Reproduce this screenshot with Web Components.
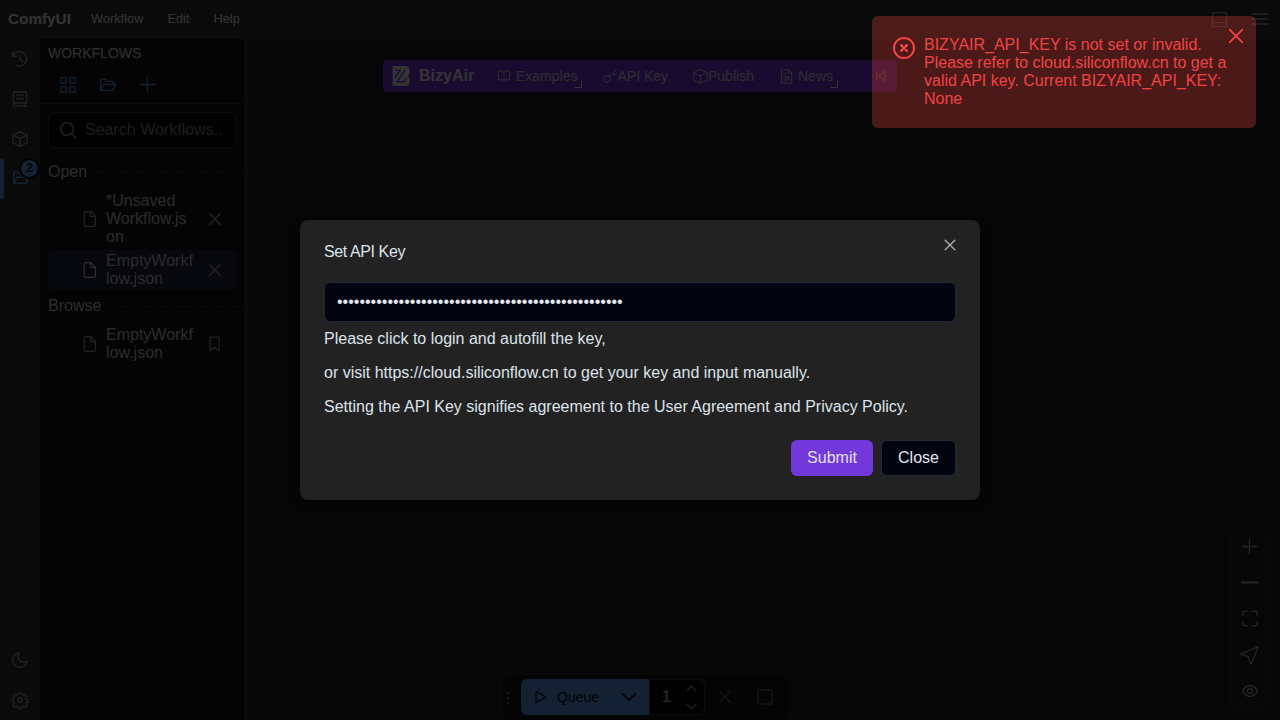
<!DOCTYPE html>
<html lang="en">
<head>
<meta charset="utf-8">
<title>ComfyUI</title>
<style>
html,body{margin:0;height:100%;overflow:hidden;background:#222}
body{font:16px/18px "Liberation Sans",Arial,sans-serif;color:#fff}
</style>
</head>
<body>
<comfy-app></comfy-app>
<script>
const ICONS = {
  history:'<path d="M.7 1v4h4"/><path d="M.9 4.8A7.2 7.2 0 1 1 4 14.2"/><path d="M8 4.2V8l2.6 2.6"/>',
  book:'<path d="M14.500 12V1H2.800Q1.500 1 1.500 2.300v11.400Q1.500 15.200 2.800 15.200H14.500M14.500 12H2.800Q1.500 12 1.500 13.500M13.500 12v3M5 4.200h6.500M5 7.700h6.500"/>',
  box:'<path d="M8 .7l7 3.300v8L8 15.300 1 12V4zM1 4l7 3.400L15 4M8 7.400v7.900"/>',
  folder:'<path d="M.7 13.300V3.200Q.7 2.200 1.700 2.200H5.300l1.700 2.200h5Q13 4.400 13 5.400V7M.8 13.200L3.600 7.300H15.500L13 13.300Z"/>',
  grid:'<rect x=".6" y=".6" width="5.800" height="5.800" rx="1.200"/><rect x="9.600" y=".6" width="5.800" height="5.800" rx="1.200"/><rect x=".6" y="9.600" width="5.800" height="5.800" rx="1.200"/><rect x="9.600" y="9.600" width="5.800" height="5.800" rx="1.200"/>',
  plus:'<path d="M7.500 .5v14.500M.2 7.500h14.600"/>',
  minus:'<path d="M.2 7.500h15.600"/>',
  search:'<circle cx="7" cy="7" r="6.300"/><path d="M11.600 11.600L15.700 15.700"/>',
  file:'<path d="M3.500 .7H9l4.400 4.600v8.600Q13.400 15.300 12 15.300H3.500Q2.200 15.300 2.200 14V2Q2.200 .7 3.500 .7zM8.700 .7v4.800h4.700"/>',
  times:'<path d="M2.500 2.500l11 11M13.500 2.500l-11 11"/>',
  bookmark:'<path d="M3 1.200h9v13.600L7.500 11.300l-4.500 3.500z"/>',
  moon:'<path d="M7 .8A7.300 7.300 0 1 0 15.200 9.200 6 6 0 0 1 7 .8z"/>',
  cog:'<circle cx="8" cy="8" r="2.200"/><path d="M6.700.8h2.600l.5 2 1.200.5 1.800-1.100 1.900 1.900-1.100 1.800.5 1.200 1.900.5v2.500l-1.900.5-.5 1.200 1.100 1.800-1.900 1.900-1.800-1.100-1.200.5-.5 2H6.700l-.5-2-1.200-.5-1.800 1.100-1.900-1.900 1.100-1.800-.5-1.200L.6 9.700V7.200l1.300-.5.5-1.200-1.100-1.800 1.900-1.900L5 2.900l1.200-.5z"/>',
  panel:'<rect x="1.500" y="1.500" width="14" height="14" rx="1"/><path d="M1.500 11.500h14"/>',
  bars:'<path d="M0 3h16M0 8h16M0 13h16"/>',
  openbook:'<path d="M8 4Q7.500 2.300 5.500 2.300H1.500v10h4.500Q8 12.300 8 14Q8 12.300 10 12.300h4.500v-10h-4Q8 2.300 8 4v10"/>',
  key:'<circle cx="4.700" cy="11.300" r="3.900"/><path d="M7.500 8.500L15 1M11 5l1.500 2 2.500-2"/>',
  news:'<path d="M3 1h7.200L13.500 4.300V15H3zM10 1v3.500h3.500M5.500 5h2"/><path d="M5.500 7.500h5.500V12H5.500z" fill="currentColor" fill-opacity=".5" stroke-opacity=".5"/>',
  back:'<path d="M3 2.500v11M13 2.500v11L5 8z"/>',
  play:'<path d="M2.500 1.500L13.800 8 2.500 14.500z"/>',
  down:'<path d="M1.500 4.800L8 11.200l6.500-6.400"/>',
  up:'<path d="M1.500 11.200L8 4.800l6.500 6.400"/>',
  stop:'<rect x="1" y="1" width="14" height="14" rx="1.500"/>',
  expand:'<path d="M.8 4.700V1.800Q.8.300 2.300.300h2.900M10.800.300h2.900q1.500 0 1.500 1.500v2.900M15.200 10.300v2.900q0 1.500-1.500 1.500h-2.900M5.200 14.700H2.300q-1.500 0-1.500-1.500v-2.900"/>',
  send:'<path d="M15.500.5L9.200 15.500 7 9 .5 6.800z"/>',
  eye:'<path d="M.5 8Q3.500 2.500 8 2.500T15.500 8Q12.500 13.500 8 13.500T.5 8z"/><circle cx="8" cy="8" r="2.500"/>',
  errorcircle:'<circle cx="8" cy="8" r="7.300"/><path d="M5.900 5.900l4.200 4.200M10.100 5.900l-4.200 4.200" stroke-width="1.750"/>',
  logo:'<path d="M.5 0H11Q14 .3 14 3.300V5.500Q14 7 12.300 8Q14 9 14 10.500V12.700Q14 16 11 16H.5z" fill="currentColor" stroke="none"/><path d="M2.700 3.300H6.700L2.700 9.200M10.300 3.300L4 12.700H9.500L11.300 9.700" stroke="#7c3aed" stroke-width="1.100" stroke-linecap="butt"/>'
};
function define(name, css, html){
  const t = document.createElement('template');
  t.innerHTML = `<style>*{box-sizing:border-box}${css}</style>${html}`;
  customElements.define(name, class extends HTMLElement{
    constructor(){ super(); this.attachShadow({mode:'open'}).append(t.content.cloneNode(true)); }
  });
}
customElements.define('ui-icon', class extends HTMLElement{
  connectedCallback(){
    const s = this.getAttribute('size') || 16, w = (this.getAttribute('weight') || 1) * 16 / s;
    if(!this.shadowRoot) this.attachShadow({mode:'open'});
    this.shadowRoot.innerHTML = `<style>:host{display:block;flex:none;width:${s}px;height:${s}px}svg{display:block;overflow:visible}</style><svg width="${s}" height="${s}" viewBox="0 0 16 16" fill="none" stroke="currentColor" stroke-width="${w}" stroke-linecap="round" stroke-linejoin="round">${ICONS[this.getAttribute('name')]}</svg>`;
  }
});

define('top-bar', `
:host{display:flex;align-items:center;height:39px;padding:0 12px 1px 8px;background:#353535;font-size:12.8px}
b{font-size:15.3px;width:83px}span{margin-right:24px}i{flex:1}
ui-icon{color:#b0b0b0}.p{margin-right:25px}`,
`<b>ComfyUI</b><span>Workflow</span><span>Edit</span><span>Help</span><i></i><ui-icon class="p" name="panel" weight="1.2"></ui-icon><ui-icon name="bars" weight="1.3"></ui-icon>`);

define('side-nav', `
:host{display:flex;flex-direction:column;width:40px;background:#353535;color:#b0b0b0}
div{height:40px;display:grid;place-items:center;position:relative}
.on{color:#60a5fa;padding:0 2px 2px 4px}
.on::before{content:"";position:absolute;left:0;top:0;width:4px;height:40px;background:#60a5fa;border-radius:0 2px 2px 0}
em{position:absolute;left:21px;top:1px;width:17px;height:17px;border-radius:50%;background:#60a5fa;color:#101014;outline:2px solid #101014;font:bold 12px/17px "Liberation Sans",Arial,sans-serif;text-align:center}
.gap{flex:1;height:auto}`,
`<div><ui-icon name="history" weight="1.3"></ui-icon></div><div><ui-icon name="book" weight="1.3"></ui-icon></div><div><ui-icon name="box" weight="1.3"></ui-icon></div><div class="on"><ui-icon name="folder" weight="1.5"></ui-icon><em>2</em></div><div class="gap"></div><div><ui-icon name="moon" weight="1.2"></ui-icon></div><div><ui-icon name="cog" weight="1.2"></ui-icon></div>`);

define('tree-heading', `
:host{display:flex;align-items:center;height:18px;color:#d4d4d4}
i{flex:1;margin-left:8px;border-top:1px dashed #3f3f46;height:0}`,
`<slot></slot><i></i>`);

define('tree-item', `
:host{display:flex;align-items:center;margin:0 8px;padding:2px 13.5px 2px 34px;border-radius:6px;color:#d4d4d4}
:host([selected]){background:#1f2940}
span{width:89px;margin:0 13.5px 0 8px;overflow-wrap:anywhere;font-variant-ligatures:none}
.f{color:#b0b0b0}:host([selected]) .f{color:#eee}`,
`<ui-icon class="f" name="file" weight="1.2"></ui-icon><span><slot></slot></span><slot name="action"></slot>`);

define('workflow-panel', `
:host{display:flex;flex-direction:column;width:208px;background:#171718;border-right:4px solid #353535}
h2{font-weight:400;font-size:14px;line-height:18px;margin:0;padding:5px 8px 0;height:26px;color:#e8e8e8}
.tools{display:flex;gap:24px;padding:12px 20px 0;height:39px;border-bottom:1px solid #3f3f46;color:#60a5fa}
.search{margin:8px 8px 15px;height:36px;border:1px solid #3f3f46;border-radius:6px;background:#09090b;display:flex;align-items:center;gap:9px;padding-left:11px;color:#a1a1aa}
.search ui-icon{color:#c0c0c0}
tree-heading{margin-left:8px}.items{display:flex;flex-direction:column;gap:2px;padding:9px 0 7px}
.search span{color:#8d8d8d}
.x{color:#a8a8a8}`,
`<h2>WORKFLOWS</h2><div class="tools"><ui-icon name="grid" weight="1.3"></ui-icon><ui-icon name="folder" weight="1.3"></ui-icon><ui-icon name="plus" weight="1.3"></ui-icon></div>
<div class="search"><ui-icon name="search" weight="1.3"></ui-icon><span>Search Workflows..</span></div>
<tree-heading>Open</tree-heading>
<div class="items"><tree-item>*Unsaved Workflow.json<ui-icon class="x" slot="action" name="times" weight="1.3"></ui-icon></tree-item><tree-item selected>EmptyWorkflow.json<ui-icon class="x" slot="action" name="times" weight="1.3"></ui-icon></tree-item></div>
<tree-heading>Browse</tree-heading>
<div class="items"><tree-item>EmptyWorkflow.json<ui-icon class="x" slot="action" name="bookmark" weight="1.3"></ui-icon></tree-item></div>`);

define('bizy-bar', `
:host{position:absolute;left:383px;top:60px;width:514px;height:32px;border-radius:4px;background:#7c3aed;display:flex;align-items:center;padding-left:9px;font-size:14px;color:#e0e0e0}
.logo{width:18px;height:20px;margin-right:9px;color:#fff}
b{font-size:16px;width:78px;color:#fff}
.m{position:relative;display:flex;align-items:center}
.m i{position:absolute;right:-5px;bottom:-3px;width:8px;height:8px;border:solid #fff;border-width:0 1px 1px 0}
.e{gap:5px;width:106px}.e i{right:21px}.k{width:90px;gap:.5px}.p{width:86px}.n{gap:4px;width:95px}.n i{right:36px}`,
`<div class="logo"><ui-icon name="logo" size="20"></ui-icon></div><b>BizyAir</b><div class="m e"><ui-icon name="openbook" size="14"></ui-icon>Examples<i></i></div><div class="m k"><ui-icon name="key" size="14"></ui-icon>API Key</div><div class="m p"><ui-icon name="box" size="15"></ui-icon>Publish</div><div class="m n"><ui-icon name="news" size="15"></ui-icon>News<i></i></div><ui-icon name="back" size="14" weight="1.2"></ui-icon>`);

define('queue-bar', `
:host{position:absolute;left:501px;top:674px;width:289px;height:48px;border:1px solid #303033;border-radius:8px;background:#171718;display:flex;padding:4px 0 0 4px;color:#777}
.grip{width:15px;height:36px;display:flex;flex-direction:column;justify-content:center;gap:3px;padding-left:1px}
.grip i{width:2px;height:2px;background:#777}.grip i:first-child{margin-top:2px}
.q{width:128px;height:36px;background:#60a5fa;color:#09090b;border-radius:6px 0 0 6px;font-size:14px;display:flex;align-items:center;padding:0 13px}
.q span{margin:0 22px 0 9px}
.n{width:56px;height:36px;background:#09090b;border:1px solid #3f3f46;border-radius:0 6px 6px 0;display:flex;align-items:center;color:#ddd;padding-left:12px}
.s{margin-left:15px;display:flex;flex-direction:column;gap:7px;color:#999}
.x{margin:10px 24px 0 12px}.o{margin-top:10px}.o,.x{color:#696969}`,
`<div class="grip"><i></i><i></i><i></i></div><div class="q"><ui-icon name="play" size="14" weight="1.4"></ui-icon><span>Queue</span><ui-icon name="down" weight="1.8"></ui-icon></div><div class="n">1<div class="s"><ui-icon name="up" size="11" weight="1.4"></ui-icon><ui-icon name="down" size="11" weight="1.4"></ui-icon></div></div><ui-icon class="x" name="times" weight="1.3"></ui-icon><ui-icon class="o" name="stop" weight="1.4"></ui-icon>`);

define('zoom-bar', `
:host{position:absolute;left:1229px;top:527px;width:41px;height:183px;border:1px solid #333;border-radius:6px;background:#232323;display:flex;flex-direction:column;color:#b8b8b8}
div{flex:1;display:grid;place-items:center}div:nth-child(-n+2){padding-top:1px}`,
`<div><ui-icon name="plus" weight="1.3"></ui-icon></div><div><ui-icon name="minus" weight="1.9"></ui-icon></div><div><ui-icon name="expand" weight="1.3"></ui-icon></div><div><ui-icon name="send" size="19" weight="1.2"></ui-icon></div><div><ui-icon name="eye" weight="1.3"></ui-icon></div>`);

define('error-toast', `
:host{position:absolute;left:872px;top:16px;width:384px;height:112px;border-radius:6px;background:rgba(239,68,68,.3);color:#ef4444;display:flex;padding:20px 12px 0 21px}
p{margin:0 0 0 9px;width:306px}.i{margin-top:1px}.c{position:absolute;right:11px;top:11px}`,
`<ui-icon class="i" name="errorcircle" size="22" weight="2"></ui-icon><p><slot></slot></p><ui-icon class="c" name="times" size="18" weight="1.900"></ui-icon>`);

define('key-dialog', `
:host{position:absolute;left:300px;top:220px;width:680px;height:280px;border-radius:8px;background:#222;color:#dce3ec;padding:23px 24px 24px;box-shadow:0 4px 12px rgba(0,0,0,.4)}
h1{font-size:16px;line-height:18px;font-weight:400;letter-spacing:-.4px;margin:0 0 21px}
input{display:block;width:100%;height:40px;border:1px solid #1e293b;border-radius:6px;background:#02050f;color:#e2e8f0;font:16px "Liberation Sans",Arial,sans-serif;padding:0 12px;margin:0;outline:0}
p{margin:0 0 16px}input+p{margin-top:8px}
.x{position:absolute;right:23px;top:18px;color:#a9adb4}
footer{display:flex;justify-content:flex-end;align-items:center;gap:8px;margin-top:24px;height:36px}
button{font:16px/18px "Liberation Sans",Arial,sans-serif;border-radius:6px;border:0;margin:0;height:36px;width:82px;padding:0;background:#7338d9;color:#e2e0f2}
button.c{width:75px;height:36px;background:#02050f;border:1px solid #1e293b;color:#e2e8f0}`,
`<h1>Set API Key</h1><ui-icon class="x" name="times" size="14" weight="1.300"></ui-icon><input type="password" value="•••••••••••••••••••••••••••••••••••••••••••••••••••"><p>Please click to login and autofill the key,</p><p>or visit https://cloud.siliconflow.cn to get your key and input manually.</p><p>Setting the API Key signifies agreement to the User Agreement and Privacy Policy.</p><footer><button>Submit</button><button class="c">Close</button></footer>`);

define('comfy-app', `
:host{display:flex;flex-direction:column;width:1280px;height:720px;overflow:hidden;position:relative}
main{flex:1;display:flex;min-height:0}
.canvas{flex:1;background:#202020}
.shade{position:absolute;inset:0;background:rgba(0,0,0,.8)}`,
`<top-bar></top-bar><main><side-nav></side-nav><workflow-panel></workflow-panel><div class="canvas"></div></main><bizy-bar></bizy-bar><queue-bar></queue-bar><zoom-bar></zoom-bar><div class="shade"></div><key-dialog></key-dialog><error-toast>BIZYAIR_API_KEY is not set or invalid. Please refer to cloud.siliconflow.cn to get a valid API key. Current BIZYAIR_API_KEY: None</error-toast>`);
</script>
</body>
</html>
